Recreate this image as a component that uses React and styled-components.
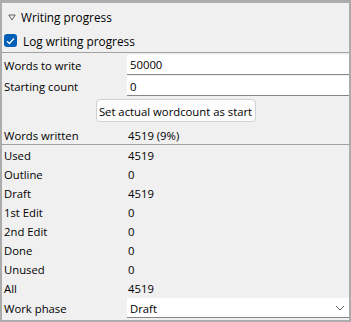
import React from 'react';
import styled, { createGlobalStyle } from 'styled-components';

const GlobalStyle = createGlobalStyle`
  body {
    margin: 0;
    background: #f0f0f0;
  }
`;

const Frame = styled.section`
  box-sizing: border-box;
  width: 351px;
  height: 322px;
  border: 2px solid #acacac;
  border-top-width: 3px;
  background: #f0f0f0;
  font-family: "Open Sans", "Noto Sans", sans-serif;
  font-size: 11.3px;
  color: #000;
  white-space: nowrap;
  overflow: hidden;
`;

const Header = styled.div`
  display: flex;
  align-items: center;
  gap: 5px;
  height: 27px;
  padding-left: 6px;
  padding-top: 1px;
  box-sizing: border-box;
  font-size: 11.8px;
`;

const CheckRow = styled.label`
  display: flex;
  align-items: center;
  gap: 6px;
  height: 23px;
  padding-left: 2px;
  padding-bottom: 1px;
  box-sizing: border-box;
  border-bottom: 1px solid #a0a0a0;
  font-size: 11.8px;
`;

const Box = styled.span`
  width: 13px;
  height: 13px;
  border-radius: 3px;
  background: #005fb8;
  display: flex;
  align-items: center;
  justify-content: center;
`;

const Row = styled.div`
  display: grid;
  grid-template-columns: 125px 1fr;
  align-items: center;
  height: ${(props) => props.h || 19}px;
  box-sizing: border-box;
  border-bottom: ${(props) => (props.divider ? '1px solid #a0a0a0' : 'none')};
`;

const Label = styled.span`
  padding-left: 2px;
  padding-top: 2px;
`;

const Value = styled.span`
  padding-left: 1px;
  padding-top: 2px;
`;

const Field = styled.div`
  box-sizing: border-box;
  height: 21px;
  background: #fff;
  border-top: 1px solid #f4f4f4;
  border-bottom: 1px solid #868686;
  padding: 1px 4px 0 3px;
  display: flex;
  align-items: center;
  justify-content: space-between;
`;

const ButtonRow = styled.div`
  display: flex;
  justify-content: center;
  height: 29px;
  padding-top: 3px;
  box-sizing: border-box;
`;

const Button = styled.button`
  font: inherit;
  height: 23px;
  width: 160px;
  background: #fdfdfd;
  border: 1px solid #d0d0d0;
  border-radius: 4px;
  padding: 1px 0 0;
  color: #000;
`;

const stats = [
  ['Used', '4519'],
  ['Outline', '0'],
  ['Draft', '4519'],
  ['1st Edit', '0'],
  ['2nd Edit', '0'],
  ['Done', '0'],
  ['Unused', '0'],
  ['All', '4519'],
];

const Triangle = () => (
  <svg width="8" height="7" viewBox="0 0 8 7">
    <path d="M0.8 1 H7.2 L4 6 Z" fill="none" stroke="#606060" strokeWidth="1" />
  </svg>
);

const Check = () => (
  <svg width="9" height="8" viewBox="0 0 9 8">
    <path d="M1 4.2 L3.4 6.5 L8 1.5" fill="none" stroke="#fff" strokeWidth="1.3" />
  </svg>
);

const Chevron = () => (
  <svg width="10" height="6" viewBox="0 0 10 6">
    <path d="M1 1 L5 5 L9 1" fill="none" stroke="#606060" strokeWidth="1" />
  </svg>
);

export default function App() {
  return (
    <>
      <GlobalStyle />
      <Frame>
        <Header>
          <Triangle />
          <span>Writing progress</span>
        </Header>
        <CheckRow>
          <Box>
            <Check />
          </Box>
          <span>Log writing progress</span>
        </CheckRow>
        <Row h={22}>
          <Label>Words to write</Label>
          <Field>50000</Field>
        </Row>
        <Row h={21}>
          <Label>Starting count</Label>
          <Field>0</Field>
        </Row>
        <ButtonRow>
          <Button>Set actual wordcount as start</Button>
        </ButtonRow>
        <Row h={20} divider>
          <Label>Words written</Label>
          <Value>4519 (9%)</Value>
        </Row>
        {stats.map(([k, v]) => (
          <Row key={k}>
            <Label>{k}</Label>
            <Value>{v}</Value>
          </Row>
        ))}
        <Row h={21}>
          <Label>Work phase</Label>
          <Field>
            <span>Draft</span>
            <Chevron />
          </Field>
        </Row>
      </Frame>
    </>
  );
}
